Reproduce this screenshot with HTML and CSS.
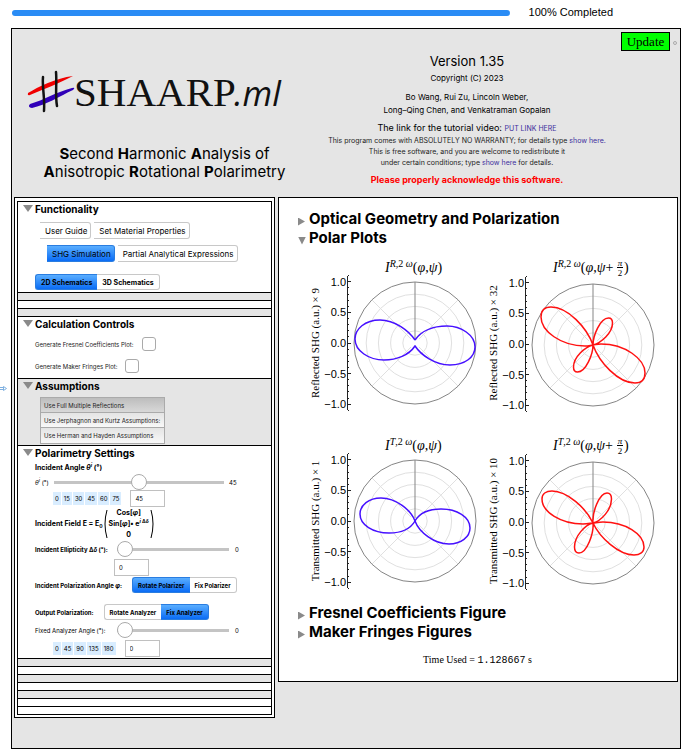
FILE: index.html
```html
<!DOCTYPE html>
<html lang="en">
<head>
<meta charset="utf-8">
<title>#SHAARP.ml</title>
<link rel="stylesheet" href="styles.css">
</head>
<body>
<div class="progress-row">
  <div class="progress" role="progressbar" aria-label="Progress" aria-valuenow="100"></div>
  <span class="progress-text">100% Completed</span>
</div>
<svg class="cell-mark" width="7" height="5" viewBox="0 0 7 5" aria-hidden="true"><path d="M0 1.500H3M0 3.500H3M3.500 .5V4.500L6.500 2.500Z"/></svg>

<main class="frame">
  <header class="header">
    <div class="brand">
      <svg class="logo" width="264" height="48" viewBox="0 0 264 48" role="img" aria-label="#SHAARP.ml">
        <path d="M6 24 C16 18 34 9 51 7 C38 14 22 20 8 26 Q5 27 6 24 Z" fill="#f00000"/>
        <path d="M8 35 C22 31 34 23 50 19 Q54 18 51 21 C38 27 24 36 10 39 Q5 38 8 35 Z" fill="#3000b8"/>
        <path d="M21 8 C20 18 23 28 22 42 M34 3 C35 14 33 26 35 37" fill="none" stroke="#111" stroke-width="2.500" stroke-linecap="round"/>
        <text class="logo-caps" x="52" y="37">SHAARP</text>
        <text class="logo-ml" x="212" y="37">.ml</text>
      </svg>
      <h1 class="tagline"><b>S</b>econd <b>H</b>armonic <b>A</b>nalysis of<br><b>A</b>nisotropic <b>R</b>otational <b>P</b>olarimetry</h1>
    </div>
    <div class="about">
      <p class="version">Version 1.35</p>
      <p class="copyright">Copyright (C) 2023</p>
      <p class="authors">Bo Wang, Rui Zu, Lincoln Weber,<br>Long–Qing Chen, and Venkatraman Gopalan</p>
      <p class="tutorial">The link for the tutorial video: <a href="#video">PUT LINK HERE</a></p>
      <p class="legal">This program comes with ABSOLUTELY NO WARRANTY; for details type <a href="#warranty">show here.</a><br>This is free software, and you are welcome to redistribute it<br>under certain conditions; type <a href="#conditions">show here</a> for details.</p>
      <p class="notice">Please properly acknowledge this software.</p>
    </div>
    <div class="actions">
      <button class="update">Update</button>
      <span class="dot"></span>
    </div>
  </header>

  <div class="panels">
    <section class="controls">
      <div class="stack">
        <details open class="sec functionality">
          <summary>Functionality</summary>
          <div class="row first">
            <button class="tab">User Guide</button><button class="tab">Set Material Properties</button>
          </div>
          <div class="row second">
            <button class="tab on">SHG Simulation</button><button class="tab">Partial Analytical Expressions</button>
          </div>
          <div class="row third">
            <div class="seg"><button class="on">2D Schematics</button><button>3D Schematics</button></div>
          </div>
        </details>
        <div class="bar grey"></div>
        <div class="bar"></div>
        <div class="bar grey"></div>
        <details open class="sec calc">
          <summary>Calculation Controls</summary>
          <div class="check"><label for="fresnel">Generate Fresnel Coefficients Plot:</label><input type="checkbox" id="fresnel"></div>
          <div class="check"><label for="maker">Generate Maker Fringes Plot:</label><input type="checkbox" id="maker"></div>
        </details>
        <details open class="sec assume grey">
          <summary>Assumptions</summary>
          <div class="list">
            <button class="on">Use Full Multiple Reflections</button>
            <button>Use Jerphagnon and Kurtz Assumptions:</button>
            <button>Use Herman and Hayden Assumptions</button>
          </div>
        </details>
        <details open class="sec polar">
          <summary>Polarimetry Settings</summary>
          <div class="line heading"><span>Incident Angle <i>θ<sup>i</sup></i> (°)</span></div>
          <div class="line slide short"><label for="theta"><i>θ<sup>i</sup></i> (°)</label><input type="range" id="theta" min="0" max="90" value="45"><output>45</output></div>
          <div class="line chips"><button>0</button><button>15</button><button>30</button><button>45</button><button>60</button><button>75</button><input class="box" type="text" aria-label="Incident angle" value="45"></div>
          <div class="line formula">
            <span>Incident Field E = E<sub>0</sub></span>
            <svg class="paren" viewBox="0 0 4 30" aria-hidden="true"><path d="M3 1 Q-1 15 3 29"/></svg>
            <span class="vector"><span>Cos[<i>φ</i>]</span><span>Sin[<i>φ</i>]• e<sup><i>i</i> Δ<i>δ</i></sup></span><span>0</span></span>
            <svg class="paren" viewBox="0 0 4 30" aria-hidden="true"><path d="M1 1 Q5 15 1 29"/></svg>
          </div>
          <div class="line slide"><label class="strong" for="delta">Incident Ellipticity Δ<i>δ</i> (°):</label><input type="range" id="delta" value="0"><output>0</output></div>
          <div class="line lone"><input class="box" type="text" aria-label="Incident ellipticity" value="0"></div>
          <div class="line strong"><span>Incident Polarization Angle <i>φ</i>:</span><div class="seg"><button class="on">Rotate Polarizer</button><button>Fix Polarizer</button></div></div>
          <div class="line strong spaced"><span>Output Polarization:</span><div class="seg"><button>Rotate Analyzer</button><button class="on">Fix Analyzer</button></div></div>
          <div class="line slide"><label for="analyzer">Fixed Analyzer Angle (°):</label><input type="range" id="analyzer" value="0"><output>0</output></div>
          <div class="line chips"><button>0</button><button>45</button><button>90</button><button>135</button><button>180</button><input class="box" type="text" aria-label="Analyzer angle" value="0"></div>
        </details>
        <div class="bar grey"></div>
        <div class="bar"></div>
        <div class="bar grey"></div>
        <div class="bar"></div>
        <div class="bar grey"></div>
        <div class="bar"></div>
        <div class="bar"></div>
      </div>
    </section>

    <section class="results">
      <svg class="defs" width="0" height="0" aria-hidden="true">
        <defs>
          <g id="grid" fill="none">
            <g stroke="#e0e0e0">
              <circle r="12.2"/><circle r="24.4"/><circle r="36.6"/><circle r="48.8"/>
              <path d="M-43 -43L-4 -4M43 -43L4 -4M-43 43L-4 4M43 43L4 4"/>
            </g>
            <circle r="61" stroke="#858585"/>
            <path d="M0 -61V-3" stroke="#858585"/>
          </g>
          <g id="axis" stroke="#222" fill="none">
            <path d="M.5 -67V67"/>
            <path d="M1 -61.5h3M1 -30.5h3M1 .5h3M1 30.5h3M1 61.5h3"/>
            <path d="M1 -67.5h1M1 -55.5h1M1 -48.5h1M1 -42.5h1M1 -36.5h1M1 -24.5h1M1 -18.5h1M1 -12.5h1M1 -6.5h1M1 6.5h1M1 12.5h1M1 18.5h1M1 24.5h1M1 36.5h1M1 42.5h1M1 48.5h1M1 55.5h1M1 67.5h1"/>
          </g>
          <g id="scale" class="scale">
            <text y="-57">1.0</text><text y="-27">0.5</text><text y="4">0.0</text><text y="35">−0.5</text><text y="65">−1.0</text>
          </g>
        </defs>
      </svg>

      <details class="fold"><summary>Optical Geometry and Polarization</summary></details>
      <details class="fold" open>
        <summary>Polar Plots</summary>
        <div class="plots">
          <svg width="178" height="178" viewBox="0 0 178 178">
            <text class="title" x="81" y="17"><tspan class="it">I</tspan><tspan class="sup" dy="-5"><tspan class="it">R</tspan>,2 <tspan class="it">ω</tspan></tspan><tspan dy="5">(</tspan><tspan class="it">φ</tspan>,<tspan class="it">ψ</tspan>)</text>
            <text class="ylabel" transform="translate(15 88) rotate(-90)">Reflected SHG (a.u.) × 9</text>
            <use href="#scale" x="42" y="88"/><use href="#axis" x="43" y="88"/><use href="#grid" x="111" y="88"/>
            <path class="curve blue" transform="translate(111 88)" d="M0,-3 C-6,-12 -20,-23 -35,-23 C-50,-23 -60,-14 -60,-4 C-60,8 -46,17 -31,17 C-18,17 -6,12 0,3 C6,12 20,22 35,22 C50,22 60,14 60,4 C60,-8 46,-17 32,-17 C18,-17 6,-12 0,-3"/>
          </svg>
          <svg width="178" height="178" viewBox="0 0 178 178">
            <text class="title" x="71" y="17"><tspan class="it">I</tspan><tspan class="sup" dy="-5"><tspan class="it">R</tspan>,2 <tspan class="it">ω</tspan></tspan><tspan dy="5">(</tspan><tspan class="it">φ</tspan>,<tspan class="it">ψ</tspan>+</text>
            <text class="frac it" x="138" y="11">π</text><path d="M135 12.5h6" stroke="#000"/><text class="frac" x="138" y="21">2</text><text class="title" x="142" y="17">)</text>
            <text class="ylabel" transform="translate(15 88) rotate(-90)">Reflected SHG (a.u.) × 32</text>
            <use href="#scale" x="42" y="89"/><use href="#axis" x="43" y="89"/><use href="#grid" x="111" y="90"/>
            <path class="curve red" transform="translate(111 90)" d="M0,0 C-6,-17 -25,-38 -42,-38 C-48,-38 -52,-35 -52,-28 C-52,-14 -32,1 -8,1 C-4,1 -2,0 0,0 C0,-9 7,-27 15.500,-27 C18,-27 19.500,-25.500 19.500,-22 C19.500,-12 8,-2 0,0 C6,17 25,38 42,38 C48,38 52,35 52,28 C52,14 32,-1 8,-1 C4,-1 2,0 0,0 C0,9 -7,27 -15.500,27 C-18,27 -19.500,25.500 -19.500,22 C-19.500,12 -8,2 0,0"/>
          </svg>
          <svg width="178" height="178" viewBox="0 0 178 178">
            <text class="title" x="81" y="17"><tspan class="it">I</tspan><tspan class="sup" dy="-5"><tspan class="it">T</tspan>,2 <tspan class="it">ω</tspan></tspan><tspan dy="5">(</tspan><tspan class="it">φ</tspan>,<tspan class="it">ψ</tspan>)</text>
            <text class="ylabel" transform="translate(15 88) rotate(-90)">Transmitted SHG (a.u.) × 1</text>
            <use href="#scale" x="42" y="88"/><use href="#axis" x="43" y="88"/><use href="#grid" x="111" y="88"/>
            <path class="curve blue" transform="translate(111 88)" d="M0,0 C-4,-11 -19,-23 -34,-23 C-46,-23 -55,-16 -55,-7 C-55,4 -42,12 -26,12 C-13,12 -4,7 0,0 C4,11 19,23 34,23 C46,23 55,16 55,7 C55,-4 42,-12 26,-12 C13,-12 4,-7 0,0"/>
          </svg>
          <svg width="178" height="178" viewBox="0 0 178 178">
            <text class="title" x="71" y="17"><tspan class="it">I</tspan><tspan class="sup" dy="-5"><tspan class="it">T</tspan>,2 <tspan class="it">ω</tspan></tspan><tspan dy="5">(</tspan><tspan class="it">φ</tspan>,<tspan class="it">ψ</tspan>+</text>
            <text class="frac it" x="138" y="11">π</text><path d="M135 12.5h6" stroke="#000"/><text class="frac" x="138" y="21">2</text><text class="title" x="142" y="17">)</text>
            <text class="ylabel" transform="translate(15 88) rotate(-90)">Transmitted SHG (a.u.) × 10</text>
            <use href="#scale" x="42" y="89"/><use href="#axis" x="43" y="89"/><use href="#grid" x="111" y="90"/>
            <path class="curve red" transform="translate(111 90)" d="M0,0 C-7,-15 -26,-32 -41,-32 C-47,-32 -51,-29 -51,-24 C-51,-11 -32,1 -10,1 C-5,1 -2,0 0,0 C-1,-10 6,-30 14,-30 C17,-30 18.500,-28 18.500,-24 C18.500,-13 8,-2 0,0 C7,15 26,32 41,32 C47,32 51,29 51,24 C51,11 32,-1 10,-1 C5,-1 2,0 0,0 C1,10 -6,30 -14,30 C-17,30 -18.500,28 -18.500,24 C-18.500,13 -8,2 0,0"/>
          </svg>
        </div>
      </details>
      <details class="fold"><summary>Fresnel Coefficients Figure</summary></details>
      <details class="fold"><summary>Maker Fringes Figures</summary></details>
      <p class="time">Time Used = <code>1.128667</code> s</p>
    </section>
  </div>
</main>
</body>
</html>
```
FILE: styles.css
```css
* { box-sizing: border-box; }
body {
  margin: 0;
  position: relative;
  background: #fff;
  color: #000;
  font-family: Inter, "Liberation Sans", sans-serif;
}
p, h1 { margin: 0; }
button, input { font: inherit; color: inherit; margin: 0; padding: 0; border: 0; background: none; }
a { color: #3d2f9e; text-decoration: none; }

.progress-row { display: flex; align-items: center; gap: 19px; height: 28px; padding: 0 76px 4px 12px; }
.progress { flex: 1; height: 6px; margin-top: 2px; border-radius: 3px; background: #2a8cf5; }
.progress-text { font: 11px/14px "Liberation Sans", sans-serif; }

/* insertion marker in the page gutter */
.cell-mark { position: absolute; left: 0; top: 386px; fill: none; stroke: #7fb0e0; }

.frame { margin: 0 8px 5px 11px; padding: 0 2px 30px; border: 1px solid #000; background: #e5e5e5; }

.header { display: grid; grid-template-columns: 304fr 298fr 62px; height: 168px; }
.brand { padding-top: 40px; text-align: center; }
.logo { display: block; margin-left: 8px; }
.logo-caps { font: 41px "Liberation Serif", serif; fill: #111; }
.logo-ml { font: italic 34px "Open Sans", sans-serif; fill: #111; }
.tagline { margin-top: 28px; padding-right: 3px; font-size: 15px; font-weight: 400; line-height: 18px; }
.about { padding-top: 24px; text-align: center; white-space: nowrap; }
.version { font-size: 13px; line-height: 16px; }
.copyright { font-size: 8px; line-height: 18px; }
.authors { margin-top: 4px; font-size: 8px; line-height: 13px; }
.tutorial { margin-top: 4px; font-size: 9px; line-height: 13px; }
.tutorial a { font-size: 7px; }
.legal { font-size: 7px; line-height: 11px; color: #222; }
.notice { margin-top: 4px; font-size: 9px; font-weight: 700; line-height: 16px; color: #f00; }
.actions { display: flex; align-items: flex-start; gap: 3px; padding: 3px 0 0 5px; }
.update { width: 49px; height: 19px; border: 1px solid #000; background: #0f0; font: 13px/16px "Liberation Serif", serif; }
.dot { width: 4px; height: 4px; margin-top: 9px; border: 1px solid #aaa; border-radius: 50%; }

.panels { display: grid; grid-template-columns: 261px 1fr; gap: 3px; align-items: start; }
.controls, .results { border: 1px solid #000; background: #fff; }
.controls { padding: 3px 2px 2px; }
.stack { border: 1px solid #000; border-top: 0; }
.sec { border-top: 1px solid #000; padding-left: 17px; }
.sec summary { display: flex; align-items: center; gap: 2px; height: 13px; margin: 0 0 1px -12px; font-size: 10px; font-weight: 700; list-style: none; }
.sec summary::before { content: ""; border: 5px solid transparent; border-top: 7px solid #8a8a8a; border-bottom: 0; }
.bar { height: 8px; border-top: 1px solid #000; background: #fff; }
.grey { background: #e5e5e5; }

.row { display: flex; gap: 3px; }
.first { margin: 7px 0 6px 5px; }
.second { margin: 0 0 12px 12px; }
.third { margin-bottom: 2px; }
.tab { height: 17px; padding: 0 3px 0 5px; border: 1px solid #c8c8c8; border-left: 0; border-radius: 0 3px 3px 0; font-size: 8px; }
.on { background: linear-gradient(#5aaeff, #0a6cf5); border-color: #2a7de0; }
.seg { display: flex; height: 16px; font-size: 7px; font-weight: 700; }
.seg button { padding: 0 5px; border: 1px solid #c8c8c8; }
.seg button:first-child { border-right: 0; border-radius: 3px 0 0 3px; }
.seg button:last-child { border-left: 0; border-radius: 0 3px 3px 0; }
.seg .on { border-color: #2a7de0; }

.calc { padding: 0 0 1px 17px; }
.calc summary { margin-bottom: 3px; }
.check { display: flex; align-items: center; gap: 8px; height: 22px; font-size: 6px; color: #222; }
.check input { appearance: none; width: 14px; height: 14px; border: 1px solid #aaa; border-radius: 3px; background: #fff; }

.assume { padding-bottom: 1px; }
.list { display: flex; flex-direction: column; width: 125px; margin: 5px 0 0 5px; border: 1px solid #aaa; font-size: 6px; }
.list button { height: 15px; padding-left: 3px; border-bottom: 1px solid #aaa; background: linear-gradient(#e4e4e4, #f8f8f8); text-align: left; color: #222; }
.list button:last-child { border-bottom: 0; }
.list .on { background: linear-gradient(#bdbdbd, #d8d8d8); }

.polar { padding-bottom: 1px; font-size: 6px; }
.line { display: flex; align-items: center; gap: 10px; height: 18px; }
.strong { font-weight: 700; }
.heading { height: 15px; font-size: 7px; font-weight: 700; }
.line sup, .line sub { font-size: 5px; line-height: 0; }
.line .seg { font-size: 6px; }
.slide { gap: 6px; padding-right: 36px; }
.slide label { flex-basis: 76px; white-space: nowrap; }
.slide output { width: 8px; margin-right: -8px; }
.short { height: 14px; padding-right: 42px; gap: 5px; }
.short label { flex-basis: auto; }
.slide input { flex: 1; min-width: 0; appearance: none; height: 16px; background: linear-gradient(#c4c4c4, #c4c4c4) center / 100% 3px no-repeat; }
.slide input::-webkit-slider-thumb { appearance: none; width: 16px; height: 16px; border: 1px solid #aaa; border-radius: 50%; background: #fff; }
.chips { gap: 1px; padding-left: 18px; }
.chips button { height: 13px; padding: 0 2px; background: #d9edff; font-size: 6px; }
.box { width: 35px; height: 17px; padding-left: 4px; border: 1px solid #c0c0c0; background: #fff; font-size: 6px; }
.chips .box { margin-left: 8px; }
.formula { height: 33px; gap: 1px; font-size: 7px; font-weight: 700; }
.paren { width: 4px; height: 30px; fill: none; stroke: #000; }
.vector { display: flex; flex-direction: column; align-items: center; line-height: 11px; }
.lone { padding-left: 79px; }
.spaced { margin-top: 9px; }

.results { padding: 11px 10px 13px 19px; }
.defs { display: block; }
.fold summary { display: flex; align-items: center; gap: 4px; height: 19px; font-size: 15px; font-weight: 700; list-style: none; white-space: nowrap; }
.fold summary::before { content: ""; width: 7px; height: 8px; margin-top: 6px; background: #8a8a8a; clip-path: polygon(0 0, 100% 50%, 0 100%); }
.fold[open] summary::before { width: 8px; margin-right: -1px; clip-path: polygon(0 0, 100% 0, 50% 100%); }
.plots { display: grid; grid-template-columns: 178px 178px; margin: 8px 0 -8px 6px; }
.title { font: 14px "Liberation Serif", serif; }
.sup { font-size: 10px; }
.it { font-style: italic; }
.frac { font-family: "Liberation Serif", serif; font-size: 9px; text-anchor: middle; }
.ylabel { font: 11px "Liberation Serif", serif; text-anchor: middle; }
.scale { font: 11px "Liberation Sans", sans-serif; text-anchor: end; }
.curve { fill: none; stroke-width: 1.5; }
.blue { stroke: #4610ff; }
.red { stroke: #f11; }
.time { margin: 11px 10px 0 0; text-align: center; font: 10px/16px "Liberation Serif", serif; }
.time code { font: 10px "Liberation Mono", monospace; }
```
